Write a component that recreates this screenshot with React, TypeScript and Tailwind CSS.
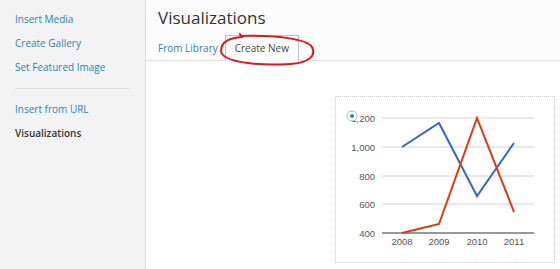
import React from "react";

// Media modal: sidebar menu, visualization header with tabs, and a line chart preview

const menuLink = "block px-[15px] leading-[24px] text-[10px] text-[#2e84b0]";

function Chart() {
  const grid = [21, 50, 79, 107];
  const yLabels = [
    { y: 21, t: "1,200" },
    { y: 50, t: "1,000" },
    { y: 79, t: "800" },
    { y: 107, t: "600" },
    { y: 136, t: "400" },
  ];
  const xs = [66, 103, 141, 178];
  const years = ["2008", "2009", "2010", "2011"];
  const blue = [50, 26, 99, 46];
  const red = [136, 127, 21, 115];
  const pts = (ys: number[]) => ys.map((y, i) => `${xs[i]},${y}`).join(" ");

  return (
    <svg width="218" height="165" viewBox="0 0 218 165" className="block">
      {grid.map((y) => (
        <line key={y} x1="46" x2="198" y1={y} y2={y} stroke="#d4d4d4" strokeWidth="1" />
      ))}
      <line x1="46" x2="198" y1="136" y2="136" stroke="#333" strokeWidth="1.2" />
      {yLabels.map((l) => (
        <text
          key={l.t}
          x="39"
          y={l.y + 3.5}
          textAnchor="end"
          fontSize="9.5"
          fill="#555"
          fontFamily="'Liberation Sans', Arial, sans-serif"
        >
          {l.t}
        </text>
      ))}
      {years.map((t, i) => (
        <text
          key={t}
          x={xs[i]}
          y="148"
          textAnchor="middle"
          fontSize="9.5"
          fill="#555"
          fontFamily="'Liberation Sans', Arial, sans-serif"
        >
          {t}
        </text>
      ))}
      <polyline points={pts(blue)} fill="none" stroke="#3366cc" strokeWidth="2" />
      <polyline points={pts(red)} fill="none" stroke="#dc3912" strokeWidth="2" />
      {/* radio marker over the top label */}
      <circle cx="16" cy="19" r="5" fill="#fff" stroke="#b8b8b8" strokeWidth="1" />
      <circle cx="16" cy="19" r="2" fill="#1e8cbe" />
    </svg>
  );
}

export default function App() {
  return (
    <div
      className="flex w-[560px] h-[269px] overflow-hidden bg-white"
      style={{ fontFamily: "'Open Sans', 'Noto Sans', sans-serif" }}
    >
      {/* Sidebar */}
      <div className="w-[146px] shrink-0 bg-[#f3f3f3] border-r border-[#dddddd] pt-[7px]">
        <a className={menuLink}>Insert Media</a>
        <a className={menuLink}>Create Gallery</a>
        <a className={menuLink}>Set Featured Image</a>
        <div className="mx-[15px] mt-[9px] mb-[8px] h-px bg-[#dedede]" />
        <a className={menuLink}>Insert from URL</a>
        <a className="block px-[15px] leading-[24px] text-[10px] font-semibold text-[#333]">
          Visualizations
        </a>
      </div>

      {/* Main */}
      <div className="flex-1 flex flex-col">
        <div className="relative h-[61px] bg-[#fcfcfc] border-b border-[#dddddd] pl-[12px]">
          <h1 className="pt-[4px] text-[17px] leading-[28px] font-normal text-[#333]">
            Visualizations
          </h1>
          <div className="flex items-end mt-[3px]">
            <span className="text-[10px] leading-[26px] text-[#3a7ea0] pr-[7px]">From Library</span>
            <span className="h-[26px] px-[9px] text-[10px] leading-[25px] text-[#444] bg-white border border-b-0 border-[#b3c5d2]">
              Create New
            </span>
          </div>
          {/* hand-drawn highlight */}
          <svg
            className="absolute left-[70px] top-[31px] pointer-events-none"
            width="104"
            height="38"
            viewBox="0 0 104 38"
          >
            <path
              d="M 26 6 C 14 7, 5 10, 5 20 C 6 31, 40 35, 74 33 C 94 32, 100 24, 96 16 C 91 8, 60 4, 25 5 L 24 3"
              fill="none"
              stroke="#e2141c"
              strokeWidth="2"
              strokeLinecap="round"
            />
          </svg>
        </div>

        <div className="flex-1 flex justify-end pr-[5px] pt-[35px]">
          <div className="w-[220px] h-[167px] border border-dotted border-[#c8c8c8] bg-white">
            <Chart />
          </div>
        </div>
      </div>
    </div>
  );
}
